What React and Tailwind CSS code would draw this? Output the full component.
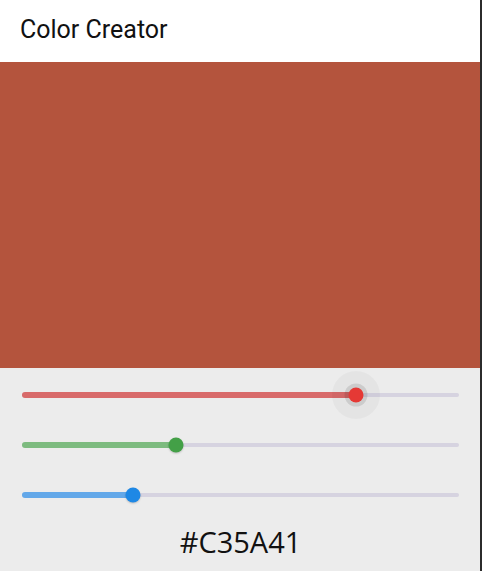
import React, { useState } from 'react';

const sliders = [
  { key: 'r', track: 'bg-[#d86a6a]', thumb: 'bg-[#e53935]', halo: true },
  { key: 'g', track: 'bg-[#7dbb7f]', thumb: 'bg-[#43a047]', halo: false },
  { key: 'b', track: 'bg-[#63a8e9]', thumb: 'bg-[#1e88e5]', halo: false },
];

const toHex = (n) => n.toString(16).padStart(2, '0').toUpperCase();

function ColorSlider({ value, track, thumb, halo }) {
  const pct = (value / 255) * 100;
  return (
    <div className="h-[50px] flex items-center">
      <div className="relative w-full h-[4px] rounded-full bg-[#d6d3e0]">
        <div className={`absolute left-0 top-[-1px] h-[6px] rounded-full ${track}`} style={{ width: `${pct}%` }} />
        {halo && (
          <div
            className="absolute top-1/2 w-[48px] h-[48px] -translate-x-1/2 -translate-y-1/2 rounded-full bg-black/[0.03]"
            style={{ left: `${pct}%` }}
          />
        )}
        <div
          className={`absolute top-1/2 w-[15px] h-[15px] -translate-x-1/2 -translate-y-1/2 rounded-full ${thumb} ${halo ? 'shadow-[0_0_0_4px_rgba(0,0,0,0.1)]' : 'shadow-[0_1px_2px_rgba(0,0,0,0.2)]'}`}
          style={{ left: `${pct}%` }}
        />
      </div>
    </div>
  );
}

export default function App() {
  const [rgb] = useState({ r: 195, g: 90, b: 65 });
  const hex = `#${toHex(rgb.r)}${toHex(rgb.g)}${toHex(rgb.b)}`;

  return (
    <div className="w-[482px] h-[571px] flex bg-[#2b2b2b] overflow-hidden">
      <div className="w-[480px] h-full flex flex-col bg-[#ececec]">
        {/* Header */}
        <div className="h-[62px] shrink-0 bg-white flex items-center px-5 pb-[2px]">
          <span className="text-[25px] font-normal text-[#111] font-['Roboto',sans-serif]">Color Creator</span>
        </div>

        {/* Preview */}
        <div className="h-[306px] shrink-0 bg-[#b4543d]" />

        {/* Controls */}
        <div className="flex flex-col pt-[2px] pl-[22px] pr-[21px]">
          {sliders.map((s) => (
            <ColorSlider key={s.key} value={rgb[s.key]} track={s.track} thumb={s.thumb} halo={s.halo} />
          ))}
          <div className="h-[44px] flex items-center justify-center">
            <span className="text-[29px] text-[#111] font-['Open_Sans',sans-serif]">{hex}</span>
          </div>
        </div>
      </div>
    </div>
  );
}
